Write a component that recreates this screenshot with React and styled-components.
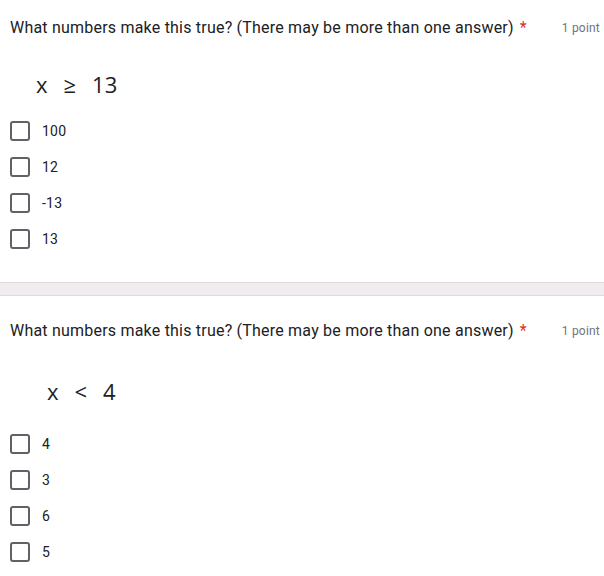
import React from "react";
import styled, { createGlobalStyle } from "styled-components";

const Global = createGlobalStyle`
  html, body { margin: 0; padding: 0; background: #ffffff; }
  body { font-family: Roboto, "Noto Sans", Arial, sans-serif; color: #202124; }
`;

const Page = styled.div`
  width: 604px;
  display: flex;
  flex-direction: column;
`;

const Card = styled.section`
  background: #ffffff;
  padding: ${(p) => p.$top}px 4px ${(p) => p.$bottom}px 10px;
  display: flex;
  flex-direction: column;
`;

const Separator = styled.div`
  height: 12px;
  background: #f1ecef;
  border-top: 1px solid #dedadd;
  border-bottom: 1px solid #dedadd;
`;

const Header = styled.div`
  display: flex;
  justify-content: space-between;
  align-items: center;
  height: 24px;
`;

const Question = styled.div`
  font-size: 16px;
  line-height: 24px;
  letter-spacing: 0.21px;
  color: #202124;
`;

const Required = styled.span`
  color: #d93025;
  margin-left: 6px;
`;

const Points = styled.div`
  font-size: 12px;
  color: #70757a;
  letter-spacing: 0.2px;
`;

const MathLine = styled.div`
  display: flex;
  align-items: center;
  height: 30px;
  margin-top: ${(p) => p.$mt}px;
  padding-left: ${(p) => p.$indent}px;
  font-family: "Open Sans", "Noto Sans", sans-serif;
  font-size: 22px;
  color: #202124;
  gap: 16px;
`;

const Options = styled.div`
  display: flex;
  flex-direction: column;
  margin-top: ${(p) => p.$mt}px;
`;

const Option = styled.label`
  display: flex;
  align-items: center;
  height: 36px;
  gap: 12px;
`;

const Box = styled.span`
  width: 16px;
  height: 16px;
  border: 2px solid #5f6368;
  border-radius: 3px;
  flex-shrink: 0;
`;

const OptionText = styled.span`
  font-size: 14px;
  letter-spacing: 0.2px;
  color: #202124;
`;

const questions = [
  { top: 16, bottom: 25, mathMt: 29, indent: 26, parts: ["x", "≥", "13"], optMt: 14, options: ["100", "12", "-13", "13"] },
  { top: 23, bottom: 16, mathMt: 33, indent: 37, parts: ["x", "<", "4"], optMt: 20, options: ["4", "3", "6", "5"] },
];

export default function App() {
  return (
    <Page>
      <Global />
      {questions.map((q, i) => (
        <React.Fragment key={i}>
          {i > 0 && <Separator />}
          <Card $top={q.top} $bottom={q.bottom}>
            <Header>
              <Question>
                What numbers make this true? (There may be more than one answer)
                <Required>*</Required>
              </Question>
              <Points>1 point</Points>
            </Header>
            <MathLine $mt={q.mathMt} $indent={q.indent}>
              {q.parts.map((p, j) => (
                <span key={j}>{p}</span>
              ))}
            </MathLine>
            <Options $mt={q.optMt}>
              {q.options.map((o) => (
                <Option key={o}>
                  <Box />
                  <OptionText>{o}</OptionText>
                </Option>
              ))}
            </Options>
          </Card>
        </React.Fragment>
      ))}
    </Page>
  );
}
